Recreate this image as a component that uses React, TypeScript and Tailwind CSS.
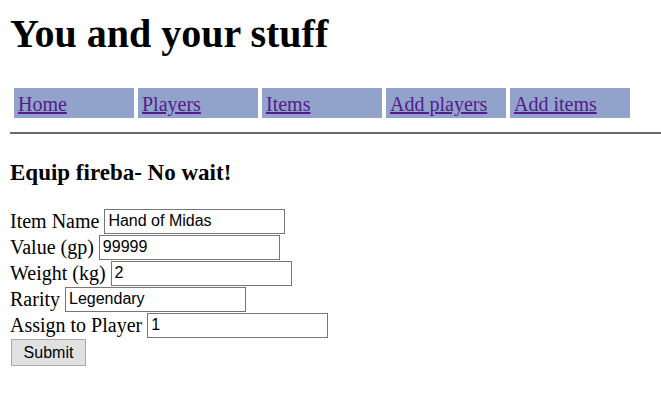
const links = ['Home', 'Players', 'Items', 'Add players', 'Add items'];

const fields = [
  { label: 'Item Name', value: 'Hand of Midas' },
  { label: 'Value (gp)', value: '99999' },
  { label: 'Weight (kg)', value: '2' },
  { label: 'Rarity', value: 'Legendary' },
  { label: 'Assign to Player', value: '1' },
];

const App = () => {
  return (
    <div className="min-h-[403px] bg-white pl-[10px] pt-[12px] font-['Liberation_Serif',serif] text-black">
      <h1 className="h-[44px] text-[40px] font-bold leading-[44px]">You and your stuff</h1>

      <nav className="mt-[32px] flex gap-1 pl-[4px]">
        {links.map((l) => (
          <div key={l} className="h-[30px] w-[120px] bg-[#91a3cb] px-[4px] text-[20px] leading-[33px]">
            <a href="#" className="text-[#551a8b] underline">
              {l}
            </a>
          </div>
        ))}
      </nav>

      <hr className="mt-[14px] border-t-2 border-[#6b6b6b]" />

      <h3 className="mt-[26px] text-[23px] font-bold leading-[26px]">Equip fireba- No wait!</h3>

      <form className="mt-[22px] flex flex-col" onSubmit={(e) => e.preventDefault()}>
        {fields.map((f) => (
          <div key={f.label} className="flex h-[26px] items-center text-[20px]">
            <span className="mr-[5px]">{f.label}</span>
            <input
              defaultValue={f.value}
              className="h-[25px] w-[181px] border border-[#767676] px-[3px] font-['Liberation_Sans',sans-serif] text-[16px] outline-none"
            />
          </div>
        ))}
        <div className="mt-[1px]">
          <button
            type="submit"
            className="ml-[1px] h-[27px] w-[75px] border border-[#a9a9a9] bg-[#e1e1e1] font-['Liberation_Sans',sans-serif] text-[16px]"
          >
            Submit
          </button>
        </div>
      </form>
    </div>
  );
};

export default App;
